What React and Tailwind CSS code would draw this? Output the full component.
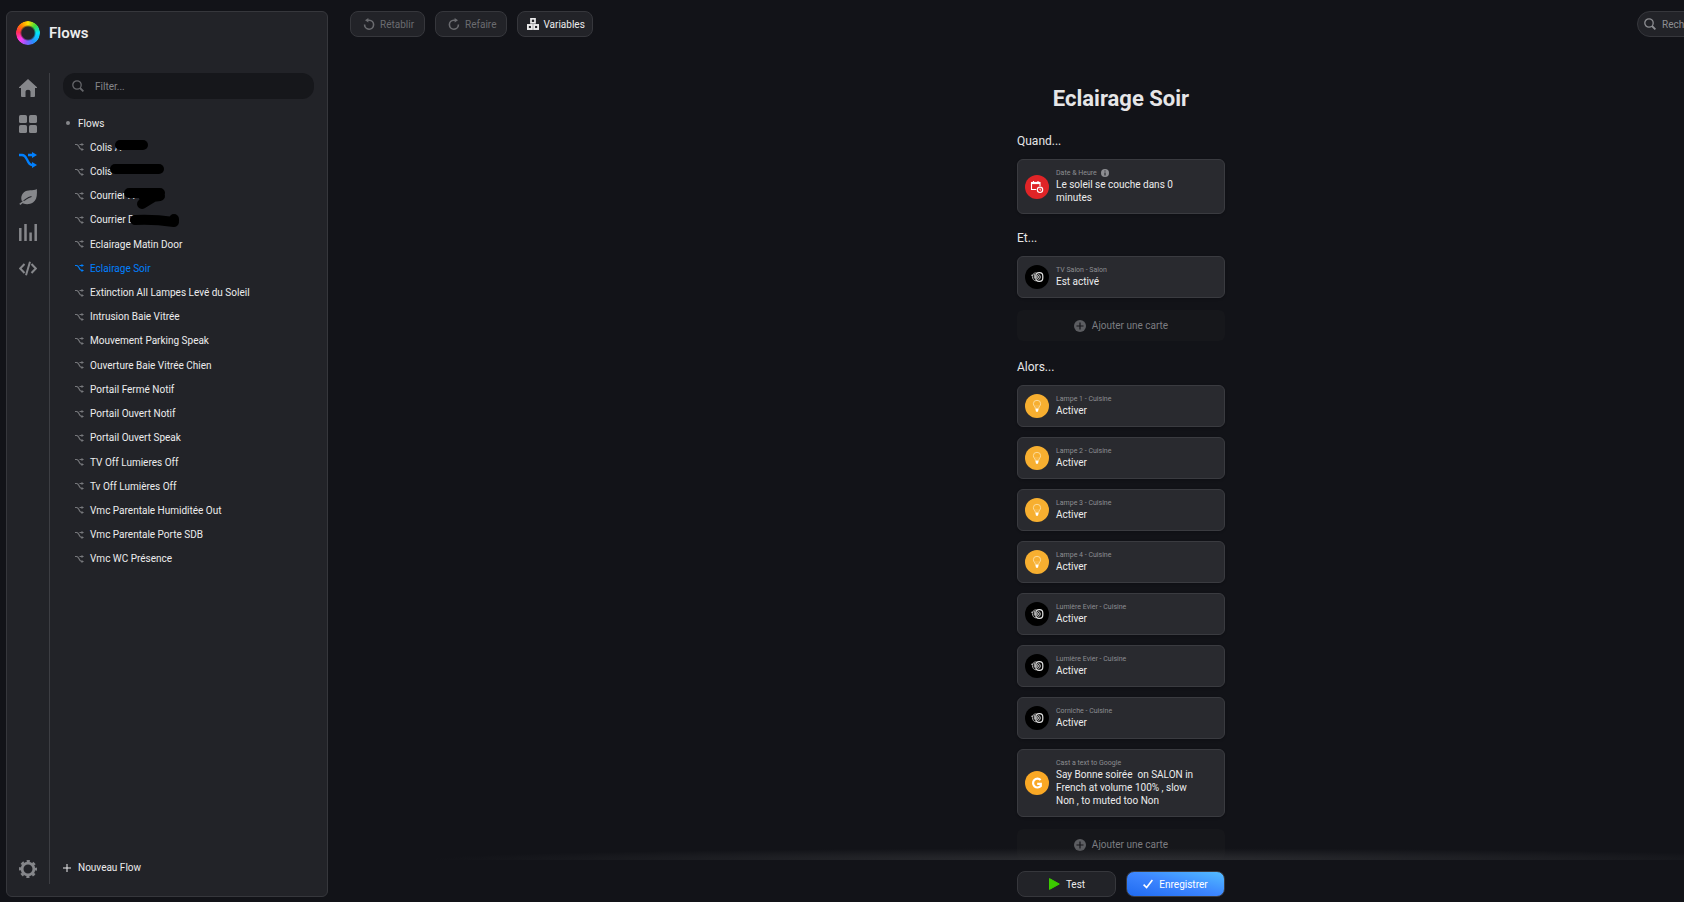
import React, { useState } from 'react'
import clsx from 'clsx'

const flows = [
  { name: 'Colis A', mask: 'M32 10H55' },
  { name: 'Colis', mask: 'M27 10H71' },
  { name: 'Courrier A', mask: 'M41 9H72 M72 9L54 20 M56 14L72 12' },
  { name: 'Courrier D', mask: 'M47 12Q65 11 86 14M86 11V13' },
  { name: 'Eclairage Matin Door' },
  { name: 'Eclairage Soir' },
  { name: 'Extinction All Lampes Levé du Soleil' },
  { name: 'Intrusion Baie Vitrée' },
  { name: 'Mouvement Parking Speak' },
  { name: 'Ouverture Baie Vitrée Chien' },
  { name: 'Portail Fermé Notif' },
  { name: 'Portail Ouvert Notif' },
  { name: 'Portail Ouvert Speak' },
  { name: 'TV Off Lumieres Off' },
  { name: 'Tv Off Lumières Off' },
  { name: 'Vmc Parentale Humiditée Out' },
  { name: 'Vmc Parentale Porte SDB' },
  { name: 'Vmc WC Présence' }
]

const actions = [
  { icon: 'bulb', device: 'Lampe 1 - Cuisine', text: 'Activer' },
  { icon: 'bulb', device: 'Lampe 2 - Cuisine', text: 'Activer' },
  { icon: 'bulb', device: 'Lampe 3 - Cuisine', text: 'Activer' },
  { icon: 'bulb', device: 'Lampe 4 - Cuisine', text: 'Activer' },
  { icon: 'socket', device: 'Lumière Evier - Cuisine', text: 'Activer' },
  { icon: 'socket', device: 'Lumière Evier - Cuisine', text: 'Activer' },
  { icon: 'socket', device: 'Corniche - Cuisine', text: 'Activer' },
  {
    icon: 'google',
    device: 'Cast a text to Google',
    text: 'Say Bonne soirée\u00a0 on SALON in French at volume 100% , slow Non , to muted too Non'
  }
]

const FlowIcon = ({ className }) => (
  <svg viewBox="0 0 18 16" fill="none" className={className} aria-hidden="true">
    <path
      d="M0 3H3C6 3 6.800 5 8 7.500C9.300 10.500 10.500 13 13 13H14M9 3H14"
      stroke="currentColor"
      strokeWidth="2.300"
    />
    <path d="M13 0L18 3L13 6ZM13 10L18 13L13 16Z" fill="currentColor" />
  </svg>
)

const SearchIcon = ({ className }) => (
  <svg
    viewBox="0 0 12 12"
    fill="none"
    stroke="currentColor"
    className={className}
    aria-hidden="true"
  >
    <circle cx="5" cy="5" r="4.2" strokeWidth="1.3" />
    <path d="M8 8L11.4 11.4" strokeWidth="1.8" />
  </svg>
)

const UndoIcon = ({ className }) => (
  <svg
    viewBox="0 0 12 12"
    fill="none"
    stroke="currentColor"
    strokeWidth="1.6"
    className={className}
    aria-hidden="true"
  >
    <path d="M4.200 2.200H6.200A4.500 4.500 0 1 1 1.600 6.600" />
    <path d="M2 2.200L5.400 0V4.600Z" fill="currentColor" stroke="none" />
  </svg>
)

const navItems = [
  {
    label: 'Accueil',
    icon: (
      <path
        d="M9 0L18 8.200V9H16V17Q16 18 15 18H11.500V12.500Q11.500 10.800 9 10.800T6.500 12.500V18H3Q2 18 2 17V9H0V8.200Z"
        fill="currentColor"
      />
    )
  },
  {
    label: 'Appareils',
    icon: (
      <g fill="currentColor">
        <rect width="8" height="8" rx="1.6" />
        <rect x="10" width="8" height="8" rx="1.6" />
        <rect y="10" width="8" height="8" rx="1.6" />
        <rect x="10" y="10" width="8" height="8" rx="1.6" />
      </g>
    )
  },
  { label: 'Flows', active: true },
  {
    label: 'Énergie',
    icon: (
      <>
        <path
          d="M17.800 2C18.400 9 17.400 13.200 14 15.500C11 17.500 7 17.600 4.200 16.400C1.200 12.500 1.800 8 5 5.200C8.500 2.300 14 4.300 17.800 2Z"
          fill="currentColor"
        />
        <path d="M12.500 9.500C9 10.500 5.500 12.600 2 16.500" stroke="#222328" strokeWidth="1.200" fill="none" />
        <path d="M5.500 13.800L.8 17.300" stroke="currentColor" strokeWidth="1.600" fill="none" />
      </>
    )
  },
  {
    label: 'Insights',
    icon: (
      <path
        d="M1.300 5V18M6.500 1V18M11.600 9.500V18M16.700 1V18"
        stroke="currentColor"
        strokeWidth="2.500"
      />
    )
  },
  {
    label: 'Script',
    icon: (
      <path
        d="M5.500 5L1.200 9.500L5.500 14M12.500 5L16.800 9.500L12.500 14M11 2.800L7 16.200"
        stroke="currentColor"
        strokeWidth="2"
        fill="none"
      />
    )
  }
]

const cardIcons = {
  clock: {
    color: 'bg-[#e02427]',
    drawing: (
      <g fill="none" stroke="#fff" strokeWidth="1.1">
        <path d="M11.300 14.500H6.500V7.500H15V11" />
        <path d="M6.500 8H15" strokeWidth="2.200" />
        <path d="M8.500 6V8M13 6V8" />
        <circle cx="15" cy="14.800" r="2.700" />
        <path d="M15 13.500V15H16.200" strokeWidth=".8" />
      </g>
    )
  },
  socket: {
    color: 'bg-black',
    drawing: (
      <g fill="none" stroke="#e2e2e2">
        <rect x="10.800" y="7.600" width="7" height="8.800" rx="3.300" strokeWidth="1.200" />
        <ellipse cx="13.600" cy="12" rx="1.700" ry="2.300" strokeWidth=".9" />
        <path d="M13.600 11V13" strokeWidth=".8" />
        <path
          d="M11.500 7.900C8.800 7.700 7.300 9.300 7.400 11.500C7.500 14 8.700 15.700 11.200 15.900"
          stroke="#a8a8a8"
          strokeWidth="1"
        />
        <path d="M7.800 10.300H6.200M9.300 9V13.500" stroke="#bdbdbd" strokeWidth="1" />
      </g>
    )
  },
  bulb: {
    color: 'bg-[#f7af30]',
    drawing: (
      <g fill="none" stroke="#fde0a6" strokeWidth=".9">
        <path d="M10.300 14.500C10.200 12.500 8.400 11.800 8.400 9.600A3.600 3.300 0 0 1 15.600 9.600C15.600 11.800 13.800 12.500 13.700 14.500Z" />
        <path d="M11 14V11M13 14V11" strokeWidth=".4" />
        <path d="M10.400 15H13.600L13 17.800H11Z" fill="#fff" stroke="none" />
      </g>
    )
  },
  google: {
    color: 'bg-[#f9a825]',
    drawing: (
      <path
        d="M15.600 9A4.400 4.400 0 1 0 15.800 15V12.900H12.200"
        fill="none"
        stroke="#fff"
        strokeWidth="2.200"
      />
    )
  }
}

function Card({ icon, device, text, info }) {
  return (
    <button className="flex w-full items-center gap-[7px] rounded-md border border-[#3a3b40] bg-[#292a2f] py-[7px] pr-3 pl-[7px] text-left shadow-sm">
      <span className={clsx('size-6 shrink-0 rounded-full', cardIcons[icon].color)}>
        <svg viewBox="0 0 24 24" className="size-6" aria-hidden="true">
          {cardIcons[icon].drawing}
        </svg>
      </span>
      <span className="block max-w-[145px] pt-px pb-0.5">
        <span className="flex h-[10px] items-center gap-1 text-[7px] leading-[10px] text-[#8d8e92]">
          {device}
          {info && (
            <svg viewBox="0 0 8 8" className="size-2" aria-hidden="true">
              <circle cx="4" cy="4" r="4" fill="#8d8e92" />
              <path d="M4 1.5V2.6M4 3.4V6.5" stroke="#292a2f" strokeWidth="1.2" />
            </svg>
          )}
        </span>
        <span className="block text-[10px] leading-[13px] text-[#ececed]">{text}</span>
      </span>
    </button>
  )
}

function AddCard() {
  return (
    <button className="mt-3 mb-0.5 flex h-[31px] w-full shrink-0 items-center justify-center gap-[6px] rounded-md bg-[#16171b] text-[10px] text-[#7c7d81]">
      <svg viewBox="0 0 12 12" className="size-3" aria-hidden="true">
        <circle cx="6" cy="6" r="6" fill="#5c5d61" />
        <path d="M6 2.5V9.5M2.5 6H9.5" stroke="#16171b" strokeWidth="1.2" />
      </svg>
      Ajouter une carte
    </button>
  )
}

const SectionTitle = ({ children }) => (
  <h2 className="mt-4 mb-[10px] text-[12px] leading-4 text-[#e6e6e7]">{children}</h2>
)

function Sidebar({ selected, onSelect }) {
  return (
    <aside className="mt-[11px] mb-[5px] ml-[6px] flex w-[322px] shrink-0 flex-col rounded-md border border-[#36373c] bg-[#222328] pb-3">
      <header className="flex h-[61px] items-start gap-[9px] pt-[9px] pl-[9px]">
        <span className="size-6 rounded-full bg-[conic-gradient(#ffe000,#3ddc3a_45deg,#00e5ff_90deg,#2b8cff_150deg,#8a5cff_190deg,#ff3df0_230deg,#ff2d55_275deg,#ff7a00_315deg,#ffe000)] mask-[radial-gradient(circle,transparent_6px,#000_8px)]" />
        <h1 className="text-[15px] leading-6 font-semibold text-[#ececed]">Flows</h1>
      </header>
      <div className="flex grow">
        <nav className="flex w-[43px] shrink-0 flex-col items-center gap-[18px] border-r border-[#3d3e43] py-[6px] text-[#86878b]">
          {navItems.map((item) => (
            <a
              key={item.label}
              href="#"
              aria-label={item.label}
              className={clsx('size-[18px]', item.active && 'text-[#0080ff]')}
            >
              {item.icon ? (
                <svg viewBox="0 0 18 18" className="size-[18px]">
                  {item.icon}
                </svg>
              ) : (
                <FlowIcon className="size-[18px]" />
              )}
            </a>
          ))}
          <a href="#" aria-label="Réglages" className="mt-auto size-[18px]">
            <svg viewBox="0 0 18 18" className="size-[18px]" fill="none" stroke="currentColor">
              <circle cx="9" cy="9" r="5.900" strokeWidth="2.800" />
              <circle
                cx="9"
                cy="9"
                r="7.900"
                strokeWidth="2.200"
                strokeDasharray="3.200 3.005"
                strokeDashoffset="1.600"
              />
            </svg>
          </a>
        </nav>
        <div className="flex grow flex-col px-[13px]">
          <label className="flex h-[26px] items-center gap-[11px] rounded-xl bg-[#16171b] pl-[9px] text-[#65666a]">
            <SearchIcon className="size-3" />
            <input
              type="text"
              placeholder="Filter..."
              aria-label="Filter"
              className="min-w-0 grow bg-transparent text-[10px] text-white placeholder:text-[#85868a] focus:outline-none"
            />
          </label>
          <ul className="mt-3 grid h-[460px] auto-rows-fr text-[10px] text-[#ececed]">
            <li className="flex items-center gap-2 pl-[3px]">
              <span className="size-1 rounded-full bg-[#86878b]" />
              <span>Flows</span>
            </li>
            {flows.map((flow) => (
              <li key={flow.name} className="relative flex pl-3">
                <button
                  onClick={() => onSelect(flow.name)}
                  className={clsx(
                    'flex items-center gap-[6px]',
                    flow.name === selected && 'text-[#0080ff]'
                  )}
                >
                  <FlowIcon
                    className={clsx('h-2 w-[9px]', flow.name !== selected && 'text-[#77787c]')}
                  />
                  {flow.name}
                </button>
                {flow.mask && (
                  <svg
                    viewBox="0 0 100 24"
                    className="absolute top-0 left-[25px] h-6 w-[100px] overflow-visible"
                    aria-hidden="true"
                  >
                    <path d={flow.mask} fill="none" stroke="#000" strokeWidth="10" strokeLinecap="round" />
                  </svg>
                )}
              </li>
            ))}
          </ul>
          <button className="mt-auto mb-2 flex items-center gap-[7px] text-[10px] leading-4 text-[#ececed]">
            <svg viewBox="0 0 8 8" className="size-2" stroke="currentColor" aria-hidden="true">
              <path d="M4 0V8M0 4H8" />
            </svg>
            Nouveau Flow
          </button>
        </div>
      </div>
    </aside>
  )
}

const toolButton =
  'flex h-[26px] items-center rounded-lg border border-[#36373c] bg-[#222328] text-[10px]'

export default function App() {
  const [selected, setSelected] = useState('Eclairage Soir')

  return (
    <div className="flex h-screen overflow-hidden bg-[#121318] font-[Roboto,sans-serif]">
      <Sidebar selected={selected} onSelect={setSelected} />
      <main className="-mr-[230px] flex min-w-0 grow flex-col">
        <div className="flex shrink-0 gap-[10px] px-[22px] pt-[11px]">
          <button disabled className={clsx(toolButton, 'gap-[5px] pr-[10px] pl-3 text-[#6b6c70]')}>
            <UndoIcon className="size-3" />
            Rétablir
          </button>
          <button disabled className={clsx(toolButton, 'gap-[5px] pr-[10px] pl-3 text-[#6b6c70]')}>
            <UndoIcon className="size-3 -scale-x-100" />
            Refaire
          </button>
          <button className={clsx(toolButton, 'gap-1 pr-[7px] pl-[9px] text-[#ececed]')}>
            <svg
              viewBox="0 0 12 12"
              className="size-3"
              fill="none"
              stroke="currentColor"
              aria-hidden="true"
            >
              <rect x="4" y=".8" width="4" height="4" strokeWidth="1.7" />
              <rect x=".9" y="7" width="4" height="4" strokeWidth="1.9" />
              <rect x="7.1" y="7" width="4" height="4" strokeWidth="1.9" />
            </svg>
            Variables
          </button>
          <label className="ml-auto flex h-[26px] w-[255px] items-center gap-[6px] rounded-full border border-[#36373c] bg-[#222328] pl-[6px] text-[#8d8e92]">
            <SearchIcon className="size-3" />
            <input
              type="text"
              placeholder="Rechercher..."
              aria-label="Rechercher"
              className="min-w-0 grow bg-transparent text-[10px] text-white placeholder:text-[#8d8e92] focus:outline-none"
            />
          </label>
        </div>

        <div className="relative min-h-0 grow overflow-hidden">
          <div className="mx-auto flex w-[208px] flex-col pt-[47px]">
            <h1 className="mb-[3px] text-center text-[22px] leading-[30px] font-bold text-[#e6e6e7]">
              {selected}
            </h1>
            <SectionTitle>Quand...</SectionTitle>
            <Card icon="clock" device="Date & Heure" text="Le soleil se couche dans 0 minutes" info />
            <SectionTitle>Et...</SectionTitle>
            <Card icon="socket" device="TV Salon - Salon" text="Est activé" />
            <AddCard />
            <SectionTitle>Alors...</SectionTitle>
            <div className="flex flex-col gap-[10px]">
              {actions.map((action, i) => (
                <Card key={i} {...action} />
              ))}
            </div>
            <AddCard />
          </div>
          <div className="pointer-events-none absolute inset-x-0 bottom-0 mx-auto h-3 max-w-[1400px] bg-[radial-gradient(ellipse_at_bottom,#2c2d31,transparent_70%)]" />
        </div>

        <footer className="mx-auto grid w-[208px] shrink-0 grid-cols-2 gap-[10px] pt-[11px] pb-[5px]">
          <button className={clsx(toolButton, 'justify-center gap-[6px] text-[#ececed]')}>
            <svg viewBox="0 0 12 12" className="size-3" aria-hidden="true">
              <path
                d="M1.500 .6L11.300 6L1.500 11.400Z"
                fill="#3ccb00"
                stroke="#3ccb00"
                strokeLinejoin="round"
              />
            </svg>
            Test
          </button>
          <button className="flex h-[26px] items-center justify-center gap-[6px] rounded-lg border border-[#3a3b40] bg-linear-to-tr from-[#1f6af0] via-[#3d86ff] to-[#55bcff] text-[10px] text-white">
            <svg
              viewBox="0 0 10 10"
              className="size-[10px]"
              fill="none"
              stroke="currentColor"
              strokeWidth="1.6"
              aria-hidden="true"
            >
              <path d="M.6 5.600L3.600 8.600L9.400 1" />
            </svg>
            Enregistrer
          </button>
        </footer>
      </main>
    </div>
  )
}
